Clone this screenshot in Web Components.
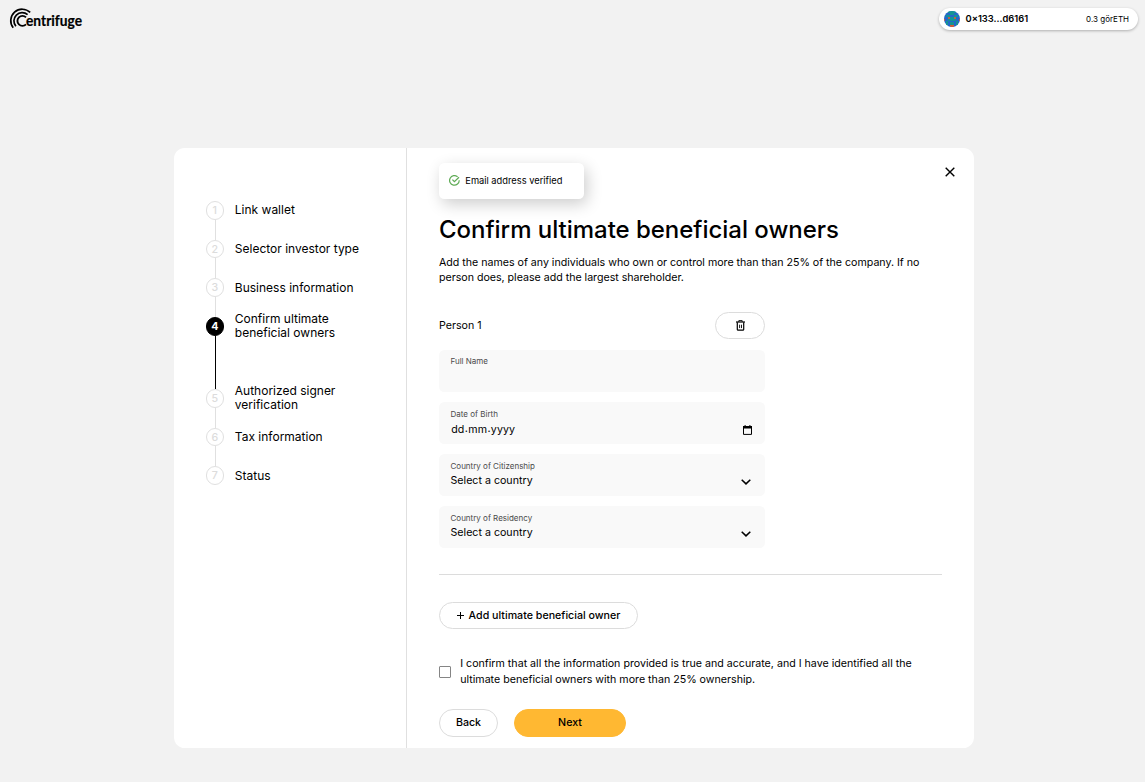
<!DOCTYPE html>
<html lang="en">
<head>
<meta charset="utf-8">
<title>Centrifuge onboarding</title>
<style>
html, body { margin: 0; height: 100%; }
body { background: #f2f2f2; color: #000; font-family: Inter, "Liberation Sans", sans-serif; font-size: 10.667px; overflow: hidden; }
</style>
</head>
<body>
<onboarding-page></onboarding-page>
<script>
const define = (name, html) => {
  const template = document.createElement('template');
  template.innerHTML = html;
  customElements.define(name, class extends HTMLElement {
    constructor() {
      super();
      this.attachShadow({ mode: 'open' }).append(template.content.cloneNode(true));
    }
  });
};

define('brand-logo', `
<style>:host{display:block;width:110px;height:40px} svg{display:block;overflow:visible}</style>
<svg width="110" height="40" viewBox="0 0 110 40" role="img" aria-label="Centrifuge">
  <g fill="none" stroke="#000" stroke-width="1.7">
    <path d="M30.2 12.4A11.5 11.5 0 0 0 13.2 27.8"/>
    <path d="M27.6 14.6A8.3 8.3 0 0 0 15.9 26.3"/>
    <path d="M26 17.4A5 5 0 1 0 26 24.4" stroke-width="1.9"/>
  </g>
  <text x="26" y="26" textLength="56" lengthAdjust="spacingAndGlyphs" font-family="Lato" font-weight="700" font-size="14.6" stroke="#000" stroke-width=".2">entrifuge</text>
</svg>`);

define('wallet-pill', `
<style>
:host{box-sizing:border-box;display:flex;align-items:center;width:199px;height:22px;padding:0 8.5px 0 5px;border-radius:11px;background:#fff;box-shadow:0 1px 3px rgba(0,0,0,.28)}
svg{width:16px;height:16px;margin-right:6px}
b{font-weight:600;font-size:9.333px;flex:1;margin-top:-1px}
span{font-size:8px}
</style>
<svg viewBox="0 0 16 16" shape-rendering="crispEdges"><defs><clipPath id="c"><circle cx="8" cy="8" r="8" shape-rendering="auto"/></clipPath></defs>
<g clip-path="url(#c)"><path fill="#2468c8" d="M0 0h16v16H0z"/>
<path fill="#149494" d="M4 0h8v2H4zM2 4h4v2H2zM10 4h4v2h-4zM6 2h4v2H6zM4 8h8v2H4zM6 10h4v4H6zM2 10h2v4H2zM12 10h2v4h-2zM6 6h4v2H6z"/>
<path fill="#b9604a" d="M4 6h2v2H4zM10 6h2v2h-2z"/><path fill="#d75b35" d="M6 14h4v2H6zM0 8h1v2H0zM15 8h1v2h-1z"/><path fill="#2468c8" d="M6 10h4v1.4H6z"/></g></svg>
<b><slot></slot></b><span><slot name="balance"></slot></span>`);

define('step-item', `
<style>
:host{display:flex;height:38.667px;gap:10.667px;--c:#e0e0e0;--n:#dcdcdc;--f:#fff}
:host([active]){height:72px;--c:#000;--n:#fff;--f:#000}
.rail{display:flex;flex-direction:column;align-items:center;width:18.667px}
.dot{box-sizing:border-box;width:18.667px;height:18.667px;flex:none;border:1px solid var(--c);border-radius:50%;background:var(--f);color:var(--n);font-size:10.667px;font-weight:500;display:flex;align-items:center;justify-content:center}
:host([active]) .dot{font-weight:700}
.line{width:1px;flex:1;background:var(--c);margin-left:1px}
:host([last]) .line{display:none}
.label{height:18.667px;display:flex;align-items:center;font-size:12px;line-height:14px;white-space:pre}
</style>
<div class="rail"><div class="dot"><slot name="n"></slot></div><div class="line"></div></div>
<div class="label"><slot></slot></div>`);

define('step-list', `
<style>:host{box-sizing:border-box;display:block;width:233px;padding:53.1px 31.5px 0 31.5px;border-right:1px solid #e0e0e0}</style>
<slot></slot>`);

define('toast-note', `
<style>
:host{position:absolute;left:32px;top:15px;box-sizing:border-box;width:145px;height:36px;padding:0 10px 1px;display:flex;align-items:center;gap:5.3px;background:#fff;border-radius:5.333px;font-size:9.3px;box-shadow:3px 5px 16px rgba(0,0,0,.2)}
svg{width:11px;height:11px;margin-top:-1px}
</style>
<svg viewBox="0 0 11 11" fill="none" stroke="#5fab55" stroke-width="1.2"><path d="M8.6 1.8A4.8 4.8 0 1 0 10.2 5.2"/><path d="M3.4 4.6l2 2 4.6-4.4"/></svg>
<slot></slot>`);

define('close-button', `
<style>:host{position:absolute;right:19px;top:19px;width:10px;height:10px} svg{display:block}</style>
<svg width="10" height="10" viewBox="0 0 10 10"><path d="M.7.7l8.6 8.6M9.3.7L.7 9.3" stroke="#000" stroke-width="1.4"/></svg>`);

define('pill-button', `
<style>
:host{box-sizing:border-box;display:flex;align-items:center;justify-content:center;height:27px;border:1px solid #dcdcdc;border-radius:14px;font-size:10.667px;font-weight:550;background:#fff}
:host([primary]){background:#ffb832;border-color:#ffb832}
</style><slot></slot>`);

define('trash-icon', `
<style>:host{display:block;width:9px;height:11px} svg{display:block}</style>
<svg width="9" height="11" viewBox="0 0 9 11" fill="none" stroke="#000"><path d="M0 2h9" stroke-width="1.2"/><path d="M2.8 1.9V.6h3.4v1.3" stroke-width=".9"/><path d="M1.3 2.3v7.1q0 .8.8.8h4.8q.8 0 .8-.8V2.3" stroke-width="1.2"/><path d="M3.6 4.7v3.4M5.5 4.7v3.4" stroke-width=".9"/></svg>`);

define('form-field', `
<style>
:host{box-sizing:border-box;display:flex;align-items:center;justify-content:space-between;height:42px;padding:0 14px 0 11.5px;border-radius:5.333px;background:#f9f9f9}
.text{align-self:flex-start;padding-top:7px}
:host([empty]) .text{padding-top:6px}
.l{font-size:8px;line-height:10px;color:#4a4a4a}
.v{font-size:10.667px;line-height:14px;margin-top:2.5px}
</style>
<div class="text"><div class="l"><slot name="label"></slot></div><div class="v"><slot></slot></div></div>
<slot name="icon"></slot>`);

define('chevron-icon', `
<style>:host{display:block;padding-top:13px} svg{display:block}</style>
<svg width="10" height="6" viewBox="0 0 10 6"><path d="M.7.7L5 4.9 9.3.7" fill="none" stroke="#000" stroke-width="1.5"/></svg>`);

define('calendar-icon', `
<style>:host{display:block;padding-top:14px;margin-right:-1px} svg{display:block}</style>
<svg width="9" height="10" viewBox="0 0 9 10"><path d="M.5 1.5h8v7.9h-8z" fill="none" stroke="#000"/><path d="M0 1h9v2.4H0zM1.6 0h1v1.5h-1zM6.4 0h1v1.5h-1z"/></svg>`);

define('date-placeholder', `
<style>:host{display:flex;padding:1.2px 0 0 .7px;letter-spacing:.1px} i{font-style:normal;position:relative;top:-1px;margin:0 .3px}</style>
<span>dd</span><i>.</i><span>mm</span><i>.</i><span>yyyy</span>`);

define('check-line', `
<style>
:host{display:flex;align-items:center;gap:9.2px;line-height:16px;white-space:pre}
.box{box-sizing:border-box;width:12px;height:12px;border:1px solid #858585;border-radius:1px;margin-top:-1px}
</style><div class="box"></div><div><slot></slot></div>`);

define('owners-form', `
<style>
:host{position:relative;box-sizing:border-box;display:flex;flex-direction:column;flex:1;padding:67px 32px 0}
h1{margin:0;font-size:24px;line-height:30px;font-weight:500;letter-spacing:-.03px;white-space:nowrap}
p{margin:9.5px 0 0;line-height:15px;letter-spacing:-.02px;white-space:pre}
.person{display:flex;align-items:center;justify-content:space-between;width:326px;margin-top:27.5px}
.person pill-button{width:50px}
.fields{display:grid;gap:10px;width:326px;margin-top:11px}
hr{width:100%;height:1px;border:0;background:#dcdcdc;margin:26px 0 27px}
.add{width:199px}
check-line{margin-top:27px}
.actions{display:flex;gap:16px;margin-top:21px}
.actions pill-button{height:28px;padding-bottom:1px}
</style>
<toast-note>Email address verified</toast-note>
<close-button></close-button>
<h1>Confirm ultimate beneficial owners</h1>
<p>Add the names of any individuals who own or control more than than 25% of the company. If no
person does, please add the largest shareholder.</p>
<div class="person"><span>Person 1</span><pill-button><trash-icon></trash-icon></pill-button></div>
<div class="fields">
<form-field empty><span slot="label">Full Name</span></form-field>
<form-field><span slot="label">Date of Birth</span><date-placeholder></date-placeholder><calendar-icon slot="icon"></calendar-icon></form-field>
<form-field><span slot="label">Country of Citizenship</span>Select a country<chevron-icon slot="icon"></chevron-icon></form-field>
<form-field><span slot="label">Country of Residency</span>Select a country<chevron-icon slot="icon"></chevron-icon></form-field>
</div>
<hr>
<pill-button class="add"><svg width="7" height="7" viewBox="0 0 7 7" style="margin-right:5px"><path d="M3.5 0v7M0 3.5h7" stroke="#000"/></svg>Add ultimate beneficial owner</pill-button>
<check-line>I confirm that all the information provided is true and accurate, and I have identified all the
ultimate beneficial owners with more than 25% ownership.</check-line>
<div class="actions"><pill-button style="width:59px">Back</pill-button><pill-button primary style="width:112px">Next</pill-button></div>`);

define('onboarding-page', `
<style>
:host{display:flex;flex-direction:column;height:782px}
header{display:flex;justify-content:space-between;align-items:flex-start;height:148px}
wallet-pill{margin:8px 7.5px 0 0}
main{display:flex;width:800px;height:600px;margin-left:174px;border-radius:10.667px;background:#fff}
</style>
<header><brand-logo></brand-logo><wallet-pill>0×133...d6161<span slot="balance">0.3 görETH</span></wallet-pill></header>
<main>
<step-list>
<step-item><span slot="n">1</span>Link wallet</step-item>
<step-item><span slot="n">2</span>Selector investor type</step-item>
<step-item><span slot="n">3</span>Business information</step-item>
<step-item active><span slot="n">4</span>Confirm ultimate
beneficial owners</step-item>
<step-item><span slot="n">5</span>Authorized signer
verification</step-item>
<step-item><span slot="n">6</span>Tax information</step-item>
<step-item last><span slot="n">7</span>Status</step-item>
</step-list>
<owners-form></owners-form>
</main>`);
</script>
</body>
</html>
